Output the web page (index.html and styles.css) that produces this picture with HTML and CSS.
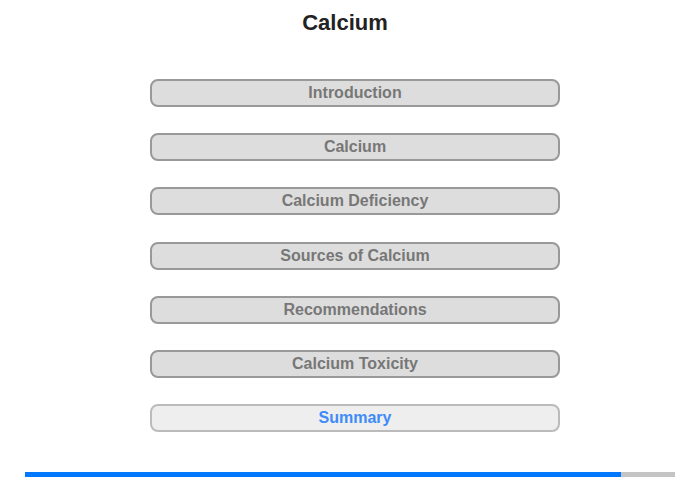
FILE: index.html
```html
<!DOCTYPE html>
<html lang="en">
<head>
  <meta charset="UTF-8">
  <meta name="viewport" content="width=device-width, initial-scale=1.0">
  <title>Calcium</title>
  <link rel="stylesheet" href="styles.css">
</head>
<body>
  <div id="page">
    <h1 class="title">Calcium</h1>

    <div id="menu">
      <button class="menu-btn">Introduction</button>
      <button class="menu-btn">Calcium</button>
      <button class="menu-btn">Calcium Deficiency</button>
      <button class="menu-btn">Sources of Calcium</button>
      <button class="menu-btn">Recommendations</button>
      <button class="menu-btn">Calcium Toxicity</button>
      <button class="menu-btn current">Summary</button>
    </div>

    <div id="progress">
      <div class="progress-fill" style="width: 91.7%"></div>
    </div>
  </div>
</body>
</html>
```

FILE: styles.css
```css
body { margin: 0; background-color: #fff; font-family: "Liberation Sans", Arial, sans-serif; }
#page { width: 700px; height: 480px; position: relative; }
.title { margin: 0; padding-top: 11px; width: 690px; text-align: center; font-size: 22px; line-height: 24px; font-weight: bold; color: #222; }
#menu { margin: 44px 0 0 150px; width: 410px; display: flex; flex-direction: column; gap: 26.2px; }
.menu-btn { display: block; width: 410px; height: 28px; padding: 0; border: 2px solid #999; border-radius: 8px; background-color: #ddd; color: #777; font-family: inherit; font-size: 16px; font-weight: bold; line-height: 24px; text-align: center; cursor: pointer; }
.menu-btn.current { border-color: #bbb; background-color: #eee; color: #3d8bf8; }
#progress { margin: 40px 25px 0; height: 5px; background-color: #c4c4c4; }
.progress-fill { height: 100%; background-color: #0078ff; }
```
